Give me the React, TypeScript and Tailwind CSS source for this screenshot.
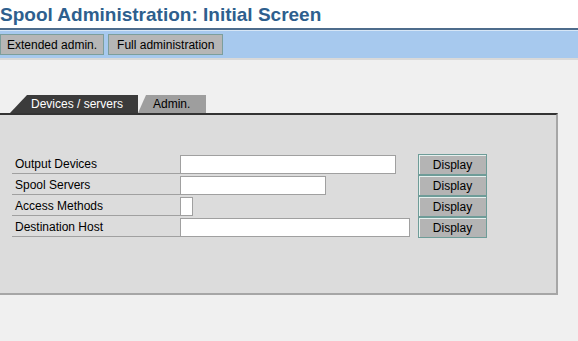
import React from "react";

const rows = [
  { label: "Output Devices", w: 216 },
  { label: "Spool Servers", w: 146 },
  { label: "Access Methods", w: 13 },
  { label: "Destination Host", w: 230 },
];

export default function App() {
  return (
    <div
      className="w-[578px] h-[341px] bg-[#f0f0f0] overflow-hidden text-[12px] text-black"
      style={{ fontFamily: '"Liberation Sans", Arial, sans-serif' }}
    >
      {/* Title */}
      <div className="bg-white h-[30px] flex items-start border-b-2 border-[#4d6c8c]">
        <div className="text-[19px] font-bold text-[#2e5f8e] leading-none mt-[5px]">
          Spool Administration: Initial Screen
        </div>
      </div>
      {/* Toolbar */}
      <div className="h-[30px] bg-[#a7c9ee] border-t border-[#d6e6f6] border-b-2 border-b-[#d9d9d9] flex items-start gap-[4px] pt-[3px]">
        <div className="h-[21px] px-[6px] flex items-center bg-[#b6b6b6] border border-[#7c9e9c] leading-none">
          Extended admin.
        </div>
        <div className="h-[21px] px-[8px] flex items-center bg-[#b6b6b6] border border-[#7c9e9c] leading-none">
          Full administration
        </div>
      </div>
      {/* Tabs */}
      <div className="mt-[35px] h-[18px] flex items-end pl-[10px]">
        <div className="h-[18px] w-[128px] bg-[#3b3b3b] text-white flex items-center pl-[21px] leading-none [clip-path:polygon(17px_0,100%_0,100%_100%,0_100%)]">
          Devices / servers
        </div>
        <div className="h-[18px] w-[68px] bg-[#9e9e9e] text-black flex items-center pl-[15px] leading-none [clip-path:polygon(8px_0,100%_0,100%_100%,0_100%)]">
          Admin.
        </div>
      </div>
      {/* Panel */}
      <div className="w-[558px] h-[182px] bg-[#dcdcdc] border-t-2 border-t-[#333333] border-r-2 border-r-[#a6a6a6] border-b-2 border-b-[#a6a6a6] pt-[38px] pl-[12px]">
        {rows.map((r) => (
          <div key={r.label} className="flex h-[21px] items-start">
            <div className="w-[168px] h-[21px] border-b border-[#a0a0a0] pl-[3px] flex items-center leading-none pt-[2px]">
              {r.label}
            </div>
            <div className="w-[238px] h-[21px] pt-[2px]">
              <div
                className="h-[19px] bg-white border border-[#a0a0a0]"
                style={{ width: r.w }}
              />
            </div>
            <div className="mt-[1px] w-[69px] h-[21px] bg-[#b4b4b4] border border-[#6e9c98] shadow-[inset_1px_1px_0_#e6f0ee] flex items-center justify-center leading-none">
              Display
            </div>
          </div>
        ))}
      </div>
    </div>
  );
}
